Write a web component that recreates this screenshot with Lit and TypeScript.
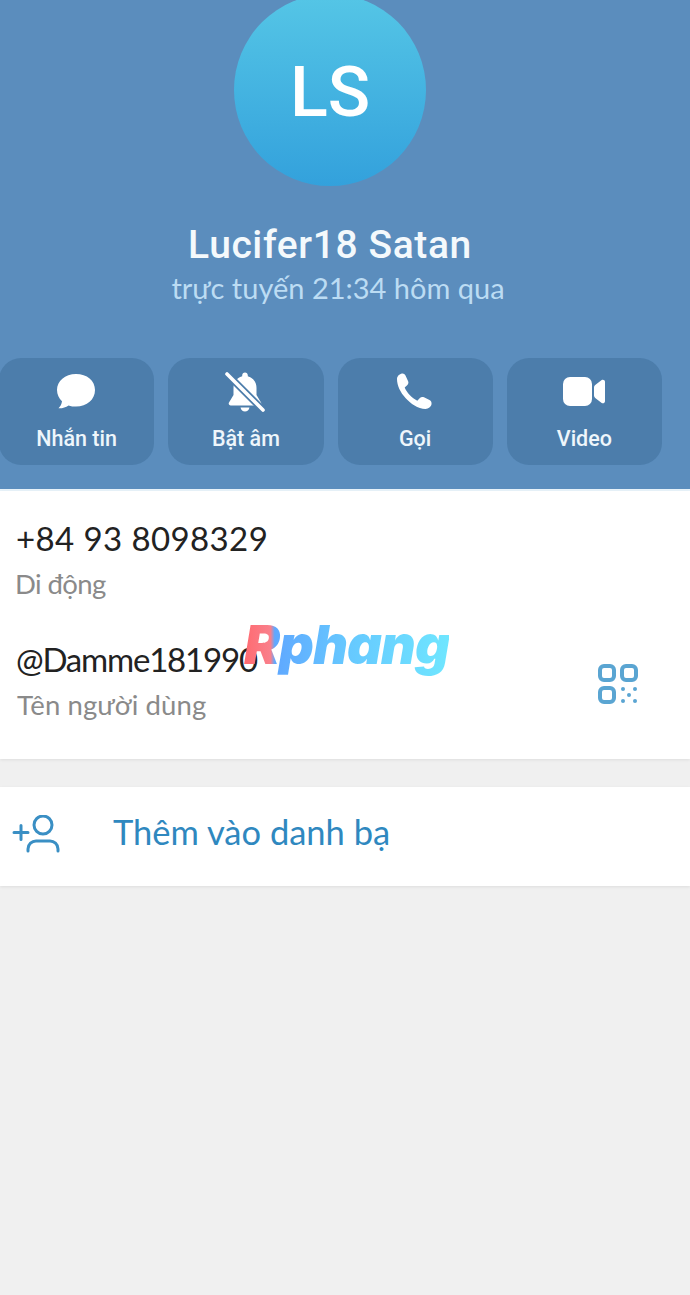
import { LitElement, html, css } from "lit";
import { customElement } from "lit/decorators.js";

@customElement("app-root")
export class AppRoot extends LitElement {
  static styles = css`
    :host { display: block; width: 690px; height: 1295px; overflow: hidden; background: #f0f0f0; font-family: Roboto, "Liberation Sans", sans-serif; position: relative; }
    .head { height: 489px; background: #5b8dbd; display: flex; flex-direction: column; align-items: center; box-sizing: border-box; padding-right: 30px; }
    .avatar { width: 192px; height: 192px; margin-top: -6px; border-radius: 50%; flex: none; box-sizing: border-box; padding-top: 4px; background: linear-gradient(180deg, #55c6e6 0%, #33a1dc 100%); color: #fff; font-size: 70px; font-weight: 500; display: flex; align-items: center; justify-content: center; line-height: 1; }
    .name { margin-top: 34px; color: #f4f9fc; font-size: 39px; font-weight: 500; line-height: 50px; letter-spacing: .6px; }
    .status { margin-top: -2px; margin-left: 16px; color: #bcdcf3; font-size: 29px; line-height: 40px; font-family: Lato, Roboto, sans-serif; }
    .actions { margin-top: 50px; margin-right: -30px; margin-left: -1px; align-self: stretch; display: flex; gap: 14px; padding: 0 28px 0 0; }
    .act { flex: 1 1 0; height: 107px; background: #4c7dab; border-radius: 22px; display: flex; flex-direction: column; align-items: center; color: #eef6fb; font-size: 21.5px; font-weight: 500; }
    .act svg { width: 44px; height: 44px; margin-top: 12px; fill: #fff; display: block; }
    .act span { margin-top: 11px; line-height: 28px; }
    .left { transform: translateX(-1px); }
    .edge { height: 2px; background: #e8f3fa; }
    .card { background: #fff; height: 268px; box-shadow: 0 1px 3px rgba(0,0,0,.08); padding-left: 16px; box-sizing: border-box; position: relative; }
    .row { display: flex; flex-direction: column; }
    .val { color: #222; font-size: 33px; line-height: 40px; font-family: Lato, Roboto, sans-serif; letter-spacing: .4px; }
    .handle { letter-spacing: -1.2px; }
    .lab { color: #8a8a8a; font-size: 27.5px; line-height: 36px; font-family: Lato, Roboto, sans-serif; margin-top: 8px; }
    .tight { letter-spacing: -.6px; margin-left: -1px; }
    .wide { letter-spacing: .1px; margin-left: 1px; }
    .r1 { padding-top: 27px; }
    .r2 { padding-top: 37px; }
    .qr { position: absolute; right: 51px; top: 172px; width: 42px; height: 42px; }
    .add { margin-top: 28px; background: #fff; height: 99px; box-shadow: 0 1px 3px rgba(0,0,0,.08); display: flex; align-items: center; padding-left: 11px; }
    .add svg { width: 52px; height: 44px; flex: none; }
    .add span { margin-left: 50px; margin-top: -10px; color: #2f88bf; font-size: 34.5px; font-family: Lato, Roboto, sans-serif; line-height: 40px; }
    .mark { position: absolute; left: 244px; top: 610px; font: italic 900 54px/70px Inter, Roboto, sans-serif; letter-spacing: -1px; background: linear-gradient(90deg, #ff6a70 0%, #f9808c 13%, #5fa8ff 15%, #66c8ff 50%, #6fe6ff 100%); -webkit-background-clip: text; background-clip: text; color: transparent; }
  `;

  render() {
    return html`
      <div class="head">
        <div class="avatar">LS</div>
        <div class="name">Lucifer18 Satan</div>
        <div class="status">trực tuyến 21:34 hôm qua</div>
        <div class="actions">
          <div class="act">
            <svg class="left" viewBox="0 0 44 44"><path d="M22 4C11 4 3 11 3 20c0 4.500 2 8.500 5 11.200-.3 3-1.700 5.300-3.500 7 3.700.2 7.200-.8 10-2.800 2.300.8 4.800 1.200 7.500 1.200 11 0 19-7 19-16.500S33 4 22 4z"/></svg>
            <span>Nhắn tin</span>
          </div>
          <div class="act">
            <svg class="left" viewBox="0 0 44 44"><path d="M22 2.500c-1.600 0-2.800 1.200-2.800 2.800v1C13.500 7.800 10.500 12.500 10.500 18v7L6 32.500c-.8 1.400.1 3 1.700 3h28.600c1.600 0 2.500-1.600 1.700-3L33.500 25v-7c0-5.500-3-10.200-8.700-11.700v-1c0-1.600-1.200-2.800-2.800-2.800zM17.500 37.500c.5 2.400 2.300 4 4.500 4s4-1.600 4.500-4z"/><path d="M4 4l36 36" stroke="#4c7dab" stroke-width="7" fill="none"/><path d="M4 4l36 36" stroke="#fff" stroke-width="3.600" stroke-linecap="round" fill="none"/></svg>
            <span>Bật âm</span>
          </div>
          <div class="act">
            <svg class="left" viewBox="0 0 44 44"><path d="M10 3.500c-2.500.4-5 2.700-5 5.500 0 6.500 3.500 13.500 8.500 19s12.500 11 20 11c3 0 5.500-2.200 6-4.700.3-1.800-.3-3.300-2-4.200l-5.500-2.800c-1.500-.7-3-.5-4.100.7l-2.600 2.700c-2.800-1.300-5.300-3.300-7.600-5.700-2.200-2.300-4-4.800-5-7.400l2.700-2.700c1.100-1.100 1.300-2.600.6-4L13.500 5.500c-.8-1.500-2-2.300-3.500-2z"/></svg>
            <span>Gọi</span>
          </div>
          <div class="act">
            <svg viewBox="0 0 44 44"><rect x="1" y="7" width="29" height="29" rx="7"/><path d="M32 17.500c0-1 .4-1.800 1.200-2.400l6.500-5c1.300-1 3.300-.1 3.300 1.700v19.400c0 1.800-2 2.700-3.300 1.700l-6.500-5c-.8-.6-1.200-1.400-1.200-2.400z"/></svg>
            <span>Video</span>
          </div>
        </div>
      </div>
      <div class="edge"></div>
      <div class="card">
        <div class="row r1">
          <div class="val">+84 93 8098329</div>
          <div class="lab tight">Di động</div>
        </div>
        <div class="row r2">
          <div class="val handle">@Damme181990</div>
          <div class="lab wide">Tên người dùng</div>
        </div>
        <svg class="qr" viewBox="0 0 42 42" fill="none" stroke="#5aa5d2" stroke-width="4">
          <rect x="3" y="3" width="14" height="14" rx="4"/>
          <rect x="25" y="3" width="14" height="14" rx="4"/>
          <rect x="3" y="25" width="14" height="14" rx="4"/>
          <g fill="#5aa5d2" stroke="none">
            <circle cx="26" cy="26" r="2"/><circle cx="38" cy="26" r="2"/><circle cx="32" cy="32" r="2"/><circle cx="26" cy="38" r="2"/><circle cx="38" cy="38" r="2"/>
          </g>
        </svg>
      </div>
      <div class="add">
        <svg viewBox="0 0 52 44" fill="none" stroke="#3a8fc4" stroke-width="3" stroke-linecap="round">
          <circle cx="32" cy="10" r="9"/>
          <path d="M17 36v-2c0-5 4-8 8-8h14c4 0 8 3 8 8v2"/>
          <path d="M3 17.500h14M10 10.500v14"/>
        </svg>
        <span>Thêm vào danh bạ</span>
      </div>
      <div class="mark">Rphang</div>
    `;
  }
}
